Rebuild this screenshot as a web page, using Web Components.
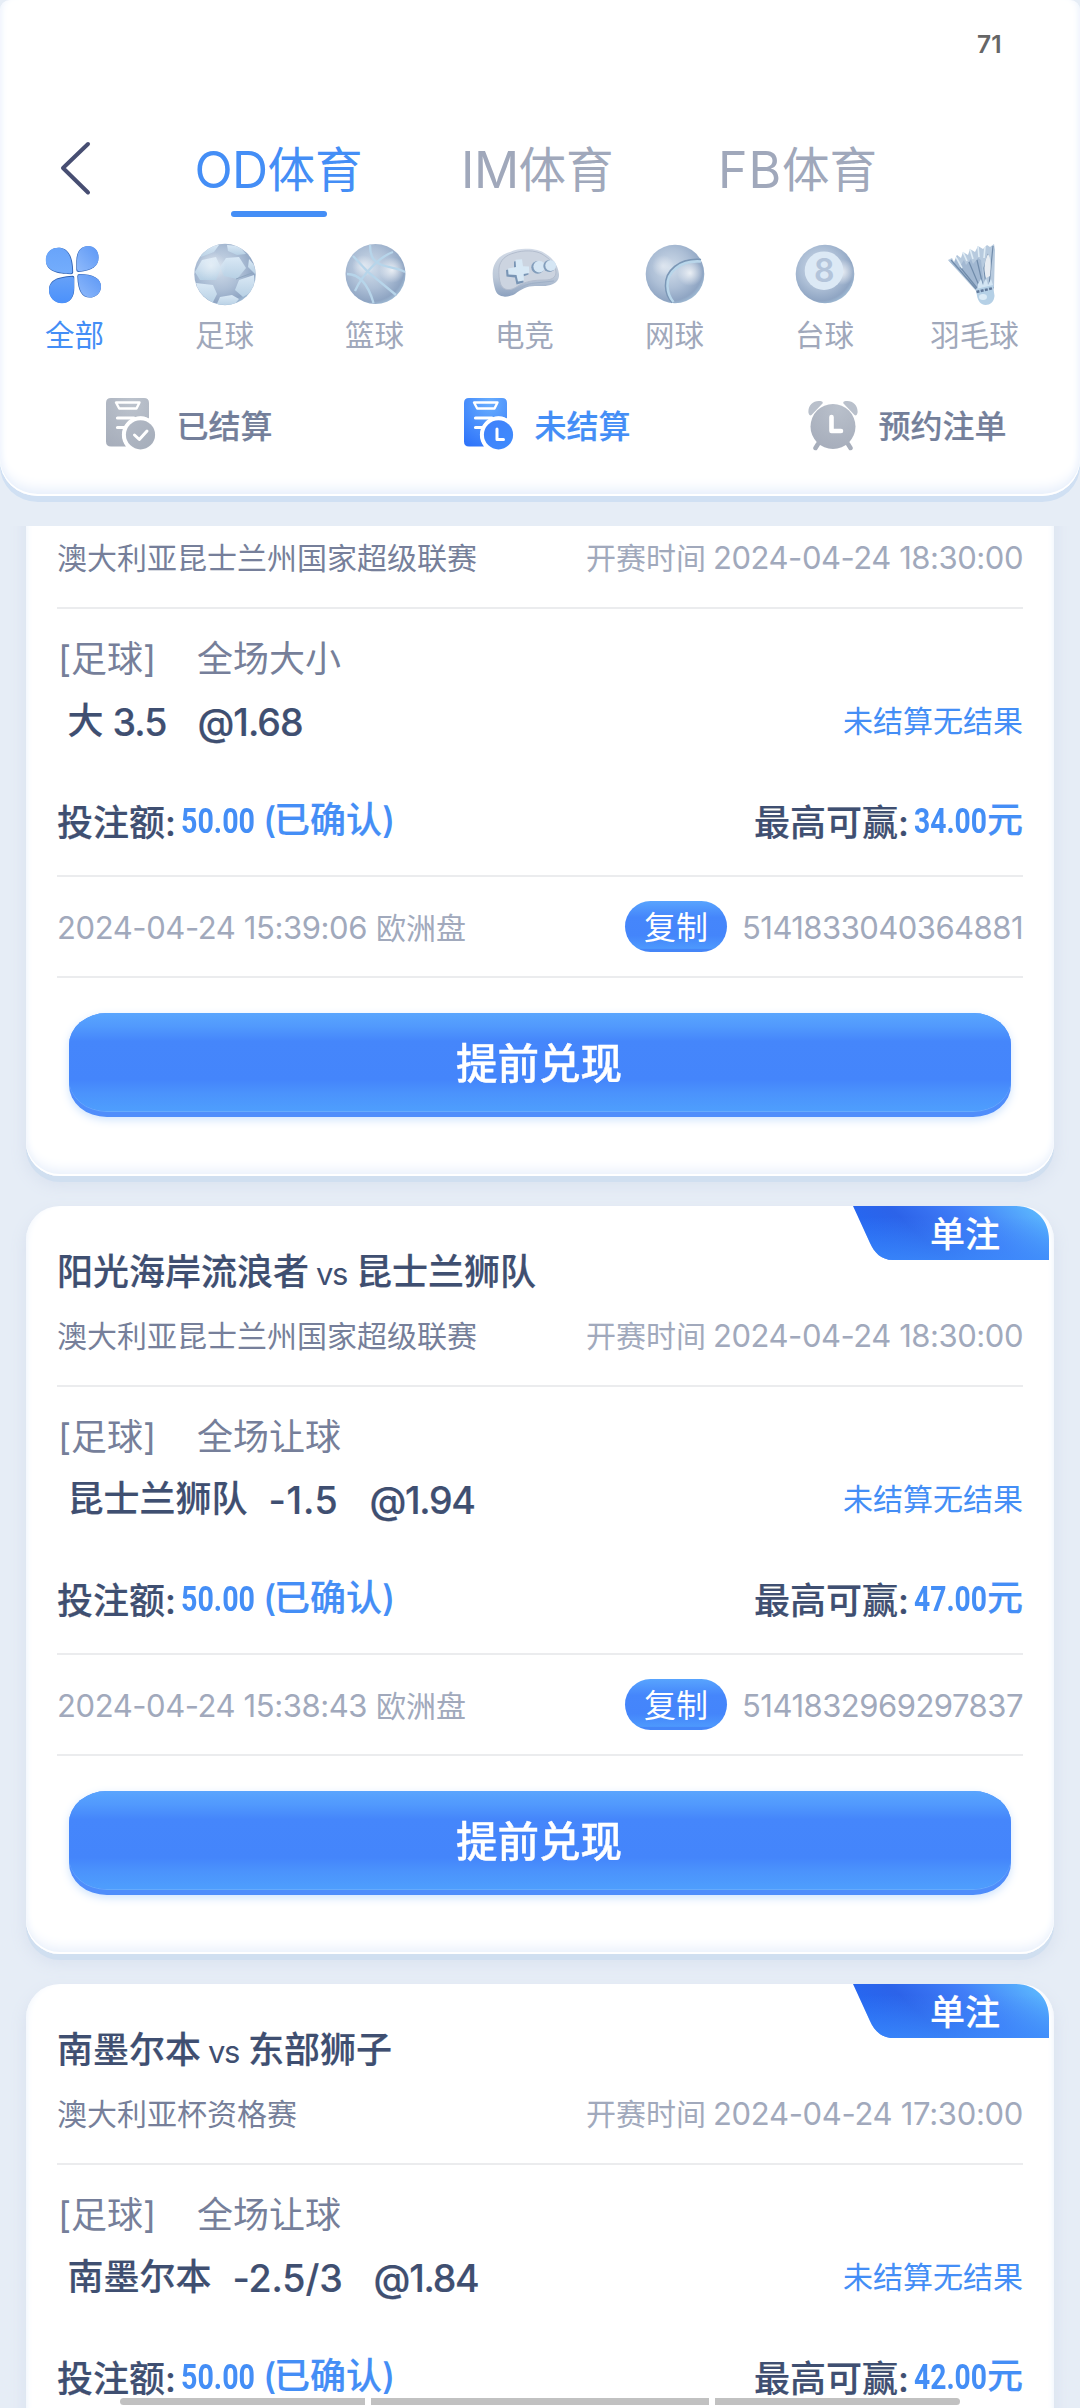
<!DOCTYPE html>
<html lang="zh-CN">
<head>
<meta charset="utf-8">
<title>注单</title>
<style>
html,body{margin:0;padding:0}
body{width:1080px;height:2408px;overflow:hidden;background:#e6edf6;
  font-family:Inter,"Noto Sans CJK SC",sans-serif;font-size:30px;color:#3f4f71}
</style>
</head>
<body>
<bet-page></bet-page>
<script>
const BLUE='#448ef6';

/* Text set to a fixed measure, by tracking or by horizontal scale */
class FitText extends HTMLElement{
  connectedCallback(){
    if(this.shadowRoot)return;
    const w=+this.getAttribute('w'),scale=this.hasAttribute('scale');
    this.attachShadow({mode:'open'}).innerHTML=`<style>
      :host{display:inline-block;width:${w}px;white-space:pre}
      span{display:inline-block;white-space:pre;transform-origin:0 50%}
      </style><span><slot></slot></span>`;
    const s=this.shadowRoot.querySelector('span');
    const n=this.textContent.length,nat=s.getBoundingClientRect().width;
    if(scale)s.style.transform=`scaleX(${w/nat})`;
    else s.style.letterSpacing=((w-nat)/n)+'px';
  }
}
customElements.define('fit-text',FitText);

const ballDefs=`<defs>
<radialGradient id="b" cx=".42" cy=".4" r=".62"><stop offset="0" stop-color="#d0dcea"/><stop offset=".55" stop-color="#adbfd6"/><stop offset=".9" stop-color="#8fa5c3"/><stop offset="1" stop-color="#9db8d2"/></radialGradient>
<radialGradient id="h"><stop offset="0" stop-color="#fff" stop-opacity=".75"/><stop offset="1" stop-color="#fff" stop-opacity="0"/></radialGradient>
<linearGradient id="l" x1="0" y1="0" x2="0" y2="1"><stop offset="0" stop-color="#d9e8f5"/><stop offset="1" stop-color="#b7d0e4"/></linearGradient>
<linearGradient id="p" x1="0" y1="0" x2="0" y2="1"><stop offset="0" stop-color="#d3dbe7"/><stop offset=".6" stop-color="#bcc8d8"/><stop offset="1" stop-color="#8ca1bf"/></linearGradient>
<linearGradient id="c1" x1="0" y1="0" x2="0" y2="1"><stop offset="0" stop-color="#68a4fa"/><stop offset="1" stop-color="#74adfc"/></linearGradient>
<linearGradient id="c2" x1="1" y1="0" x2="0" y2="1"><stop offset="0" stop-color="#5c97f5"/><stop offset="1" stop-color="#8fbafb"/></linearGradient>
<linearGradient id="c3" x1="0" y1="0" x2="0" y2="1"><stop offset="0" stop-color="#66a1f8"/><stop offset="1" stop-color="#4b91fb"/></linearGradient>
<clipPath id="k"><circle cx="36" cy="32.500" r="30.500"/></clipPath>
</defs>`;
const sportArt={
all:`<g fill="#2f62b4"><path d="M7 18.500C7 10.500 12.500 5.700 19.500 5.700C27.500 5.700 34 11.500 34.200 30.200Q34.200 32.300 32 32.200C14 32 7 27 7 18.500Z"/>
<path d="M37.300 28V19C37.300 10 41.500 4 49 4.200C55.500 4.500 59.500 9 59.500 15.500C59.500 24 54 28.200 40 30.100Q37.300 30.300 37.300 28Z"/>
<path d="M35.300 35.500V46C35.500 55 31 61 23 61C15.500 61 10 55 10 48C10 39 16.500 34.700 33.500 33.700Q35.500 33.600 35.300 35.500Z"/>
<path d="M38.300 34.300Q38.200 32.100 40.500 32C54 32 62 36.500 62 44.500C62 51 57 55.600 50.500 55.600C43.500 55.600 38.800 50 38.300 34.300Z"/></g>
<path fill="url(#c1)" d="M6.800 18C6.800 10.500 12 5.700 19 5.700C27 5.700 33 12 33.300 29.500Q33.300 31.500 31.300 31.400C14 31 6.800 26.500 6.800 18Z"/>
<path fill="url(#c2)" d="M38 27V18.500C38 9.500 42.500 3.900 49.500 4.100C55.700 4.300 59.600 9 59.600 15.200C59.600 23.500 54.500 27.500 41 29.200Q38 29.500 38 27Z"/>
<path fill="url(#c3)" d="M35 37V46.500C34.500 55.500 30.500 61.200 23 61.200C15.500 61.200 10 55.500 10 48.500C10 40 16.500 36 33 34.800Q35 34.800 35 37Z"/>
<path fill="url(#c2)" d="M39 34.300Q39 32.600 41 32.600C54.500 32.600 62 37 62 44.500C62 50.700 57 55.400 51 55.400C44 55.400 39.500 50 39 34.300Z"/>`,
soccer:`<circle cx="36" cy="32.500" r="30.700" fill="url(#b)"/>
<g clip-path="url(#k)" fill="url(#l)"><path d="M13 18L27 15L32 26L27 38L11 38L6 30Z"/><path d="M37 16L50 15L57 26L48 37L35 34L31 25Z"/><path d="M7 41L24 43L28 52L23 62L10 56Z"/><path d="M50 38L65 33L66 48L54 55L46 48Z"/><path d="M31 55L43 53L50 57L44 64L27 64Z"/><path d="M20 3L30 3L25 10L12 15L11 9Z"/><path d="M38 3L50 4L57 12L48 13L39 9Z"/><path d="M60 17L67 25L66 32L59 25Z"/></g><path d="M47 37L63 31" stroke="#8ea6bf" stroke-width="1"/>
<circle cx="22" cy="24" r="15" fill="url(#h)" opacity=".6"/>`,
basket:`<circle cx="36.500" cy="32" r="30" fill="url(#b)"/><circle cx="53" cy="28" r="13" fill="url(#h)"/><circle cx="24" cy="24" r="11" fill="url(#h)" opacity=".7"/>
<g fill="none" stroke="#b7d5ea" stroke-width="2.300"><path d="M14 14L29 30L57 53"/><path d="M54 10C42 14 24 31 16 49"/><path d="M31 3C31 15 35 20 43 23C51 26 58 26 66 30"/><path d="M8 32C21 32 29 42 34.500 61"/></g>`,
pad:`<path d="M3.700 30.700C4 22 9 13 21 10C26 7.500 32 6.500 37.700 6.700C45 6.800 52 8 57 12C64 16.500 69 23 70 32C70.300 37 68 40.500 64 42C58 45 52 43.500 46 44C38 44 32 47.500 26 52C22 54 19 54.700 16 54.700C10 54 7.500 52 6 47C4.500 42 3.500 36 3.700 30.700Z" fill="url(#p)"/>
<path d="M10 26C11 18 17 13 25 11C34 8 46 8 53 12C61 17 66 22 67 30C67 36 62 38 56 38C46 38 37 39 29 44C22 49 15 49 12 43C10 38 9.500 32 10 26Z" fill="#ccd4e0" stroke="#b3bdce" stroke-width="1"/>
<path d="M65 39L46 41C36 42 31 46 24 50" fill="none" stroke="#9fb0c7" stroke-width="1"/>
<path d="M25 19.500L31.500 18.500L33 25.500L39 26.500L39.500 32.500L34 34.500L34.500 40.500L27.500 42.500L26 35.500L17.500 34.500L17 28L25 26.500Z" fill="#7995b5"/>
<path d="M26.500 17.800L33 17.300L34 24.300L40 24.600L40.300 31L34.700 32L35 38.600L29 39.600L27.500 33L19.500 32.500L19 26.500L27 25Z" fill="#d7e8f5"/>
<circle cx="48.700" cy="25.300" r="6.400" fill="#829dbb"/><circle cx="50.200" cy="24.600" r="5.800" fill="#d5e6f4"/><circle cx="60.300" cy="24" r="6" fill="#829dbb"/><circle cx="61.700" cy="23.500" r="5.400" fill="#d5e6f4"/>`,
tennis:`<circle cx="36" cy="32" r="29.300" fill="url(#b)"/><circle cx="51" cy="31" r="13" fill="url(#h)"/><circle cx="24" cy="24" r="11" fill="url(#h)" opacity=".6"/>
<path d="M62 18.500C40 17 27 29 27.500 44C27.700 51 30 56 34 60" fill="none" stroke="#7b97b6" stroke-width="3.600"/><path d="M62 19.500C41 18 28 30 28.500 44C28.700 51 31 56 34.500 60" fill="none" stroke="#b9d6ea" stroke-width="2.600"/>`,
pool:`<circle cx="36" cy="32" r="29.300" fill="url(#b)"/><circle cx="53" cy="30" r="13" fill="url(#h)"/><circle cx="35" cy="28.700" r="19.300" fill="#dce9f5"/>
<text x="35.200" y="40" text-anchor="middle" font-family="Inter" font-weight="600" font-size="32" fill="#b3c4da">8</text>`,
shuttle:`<path d="M9 18L13 16L15 20L18 13L22 16L24 10L29 13L31 7L36 10L39 4L44 7L48 3L51 5L55 2L56 8L55 46L38 50Z" fill="#b7cade"/>
<path d="M9 18L15 22L18 13L21 24L25 18L27 23L32 17L34 22L39 16L42 18L45 44L38 47Z" fill="#a2b8d2"/>
<path d="M54 4L52 24L50 44M49 12L45 26L47 44M38 18L44 44M30 20L41 46M21 25L38 46M12 18L37 47" fill="none" stroke="#718cab" stroke-width="1.200"/>
<path d="M49 12C46 18 44 26 47 36L51 34C52 24 52 16 49 12Z" fill="#e9edf2"/><path d="M24 10L28 19M31 7L34 17M39 4L40 15M46 5L45 16M17 15L23 26" stroke="#e0ecf5" stroke-width="1.600"/>
<path d="M39 42L42 37L44 43L47 36L49 43L52 37L54 43L54 47L38 50Z" fill="#d3e5f3"/><path d="M37 47L54 43L55.500 54C55 60 51 63 46.500 63C42 63 39 59 38 54Z" fill="#b5d0e6"/><path d="M37.500 50L54.500 46" stroke="#61799a" stroke-width="2.500" stroke-dasharray="3 1.300"/><ellipse cx="44" cy="55" rx="4" ry="3" fill="#dcebf6"/>`
};
class SportTab extends HTMLElement{
  connectedCallback(){
    this.attachShadow({mode:'open'}).innerHTML=`<style>
    :host{display:flex;flex-direction:column;align-items:center;width:150px;color:#a0a8bb;font-size:29.500px}
    :host([active]){color:${BLUE}} svg{display:block} span{height:36px;line-height:36px;margin-top:8.500px;margin-left:-1px}
    </style><svg width="72" height="66" viewBox="0 0 72 66">${ballDefs}${sportArt[this.getAttribute('icon')]}</svg><span><slot></slot></span>`;
  }
}
customElements.define('sport-tab',SportTab);

const sheet=(badge)=>`<path fill="url(#g)" d="M5 0H38Q43 0 43 5V20.500A18.500 18.500 0 0 0 20 48.500H5Q0 48.500 0 43.500V5Q0 0 5 0Z"/>
<path d="M10 4.500H33.500L30.500 10.500H13.200Z" fill="none" stroke="#fff" stroke-width="2.400" stroke-linejoin="round"/>
<path d="M11.500 20H28M11.500 29.500H18" stroke="#fff" stroke-width="3.200" stroke-linecap="round"/>
<circle cx="34.500" cy="36.800" r="18.200" fill="#fff"/><circle cx="34.500" cy="36.800" r="14.600" fill="url(#g2)"/>${badge}`;
const stateArt={
done:['#bcc3cd','#a7aebb','#b2b9c5','#a5adba',sheet('<path d="M28.500 37L33.300 41.500L41 33" fill="none" stroke="#fff" stroke-width="3" stroke-linecap="round" stroke-linejoin="round"/>')],
open:['#68aefe','#2f74fa','#3f80fb','#3f8cfd',sheet('<path d="M33 31V41.500H39.500" fill="none" stroke="#fff" stroke-width="3" stroke-linecap="round" stroke-linejoin="round"/>')],
clock:['#b9c0cb','#a5acba','#b9c0cb','#a5acba',`<g transform="translate(0 1)"><g fill="#b9c0cb"><path d="M.5 14C-.5 6 6 .5 14 2.500Q15.500 3.500 14 5L3.500 16Q1.300 17.500 .5 14Z"/><path d="M49.500 14C50.500 6 44 .5 36 2.500Q34.500 3.500 36 5L46.500 16Q48.700 17.500 49.500 14Z"/></g><path d="M10 45L7.500 49M40 45L42.500 49" stroke="#a7aebb" stroke-width="4.500" stroke-linecap="round"/><circle cx="25" cy="27.500" r="22.500" fill="url(#g)"/><path d="M23.500 18V32H33" fill="none" stroke="#fff" stroke-width="4.600" stroke-linecap="round" stroke-linejoin="round"/></g>`]
};
class StateTab extends HTMLElement{
  connectedCallback(){
    const a=stateArt[this.getAttribute('icon')];
    this.attachShadow({mode:'open'}).innerHTML=`<style>
    :host{display:flex;align-items:flex-start;gap:20.500px;color:#747f9a;font-size:32px;font-weight:500;line-height:57px}
    :host([active]){color:${BLUE}} svg{display:block} span{white-space:nowrap;-webkit-text-stroke:.2px}
    </style><svg width="50" height="53" viewBox="0 0 50 53"><defs>
    <radialGradient id="g" cx=".6" cy=".1" r="1"><stop offset="0" stop-color="${a[0]}"/><stop offset="1" stop-color="${a[1]}"/></radialGradient>
    <linearGradient id="g2" x1="0" y1="0" x2="1" y2="1"><stop offset="0" stop-color="${a[2]}"/><stop offset="1" stop-color="${a[3]}"/></linearGradient></defs>${a[4]}</svg><span><slot></slot></span>`;
  }
}
customElements.define('state-tab',StateTab);

class AppHeader extends HTMLElement{
  connectedCallback(){
    this.attachShadow({mode:'open'}).innerHTML=`<style>
    :host{display:flex;flex-direction:column;position:relative;z-index:2;box-sizing:border-box;height:496px;background:#fff;
      border-radius:10px 10px 38px 38px/10px 10px 36px 36px;
      box-shadow:0 6px 0 #d0e0f3,inset 0 -2px 0 #fff,inset 0 -14px 14px -8px #e4edfb,inset 7px 0 7px -5px #f0f5fd,inset -7px 0 7px -5px #f0f5fd}
    .status{height:88px;display:flex;justify-content:flex-end;box-sizing:border-box;padding-right:78px;
      font:600 24.500px/88px Inter;color:#666}
    .nav{height:130px;display:flex}
    .back{padding:51px 0 0 58px;width:194.500px;box-sizing:border-box}
    .p{display:flex;flex-direction:column;align-items:flex-start;color:#a0a8bb;font-size:47.500px;line-height:60px;padding-top:52px}
    .p div{display:flex}
    .p.on{color:${BLUE}} .p i{width:96px;height:6px;border-radius:3px;background:${BLUE};margin:10.500px 0 0 36.500px}
    .sports{display:flex;margin-top:24px;height:112px}
    .states{display:flex;margin-top:44px}
    fit-text{font-size:50px;font-weight:400}
    </style>
    <div class="status"><fit-text w="25" style="font:inherit">71</fit-text></div>
    <div class="nav"><div class="back"><svg width="34" height="58" viewBox="0 0 34 58" style="display:block"><path d="M30 5L5 29L30 53.500" fill="none" stroke="#474e72" stroke-width="4" stroke-linecap="round" stroke-linejoin="round"/></svg></div>
      <div class="p on" style="width:266.500px"><div><fit-text w="73">OD</fit-text>体育</div><i></i></div>
      <div class="p" style="width:257px"><div><fit-text w="57.500">IM</fit-text>体育</div></div>
      <div class="p"><div><fit-text w="64">FB</fit-text>体育</div></div>
    </div>
    <div class="sports"><slot name="sport"></slot></div>
    <div class="states"><slot name="state"></slot></div>`;
  }
}
customElements.define('app-header',AppHeader);

class GlossButton extends HTMLElement{
  connectedCallback(){
    this.attachShadow({mode:'open'}).innerHTML=`<style>
    :host{display:block;height:104px;box-sizing:border-box;border-radius:38px/32px;text-align:center;color:#fff;
      font-size:41.500px;font-weight:500;line-height:103px;
      background:#4f8dfb;filter:drop-shadow(0 3px 4px #cfe4fd)}
    div{height:98px;border-radius:38px/32px;background:linear-gradient(#59a5fe 0,#5199fd 14%,#4586fb 29%,#4485fb 68%,#4b93fc 82%,#4e9efd 100%);box-shadow:0 1px 0 #65aafc}
    span{-webkit-text-stroke:.4px;margin-left:-2px}
    </style><div><span><slot></slot></span></div>`;
  }
}
customElements.define('gloss-button',GlossButton);

class CopyPill extends HTMLElement{
  connectedCallback(){
    this.attachShadow({mode:'open'}).innerHTML=`<style>
    :host{display:block;width:102px;height:51px;border-radius:26px;text-align:center;color:#fff;font-size:32px;line-height:54px;
      background:linear-gradient(#58a4fe 0,#4586fb 32%,#4485fb 68%,#4d99fd 93%,#4586f8 94%)}
    </style><slot></slot>`;
  }
}
customElements.define('copy-pill',CopyPill);

class BetCard extends HTMLElement{
  connectedCallback(){
    const d=n=>this.getAttribute(n);
    const badge=`<div class="badge"><svg width="196" height="54" viewBox="0 0 196 54"><defs>
      <linearGradient id="a" x1="0" y1=".5" x2="1" y2=".2"><stop offset="0" stop-color="#2468f3"/><stop offset=".3" stop-color="#2c63e9"/><stop offset=".62" stop-color="#417ef8"/><stop offset="1" stop-color="#5dbafe"/></linearGradient>
      <linearGradient id="f" x1="0" y1="0" x2="0" y2="1"><stop offset=".2" stop-color="#3d8cfb" stop-opacity="0"/><stop offset="1" stop-color="#3d8cfb" stop-opacity=".75"/></linearGradient></defs>
      <path fill="url(#a)" d="M0 0H162C183 0 196 14 196 34V54H40C28 54 21 46 17 37Z"/><path fill="url(#f)" d="M0 0H162C183 0 196 14 196 34V54H40C28 54 21 46 17 37Z"/></svg><span>单注</span></div>`;
    const title=`<span class="m">${d('home')}</span><small><fit-text w="31">vs</fit-text></small><span class="m">${d('away')}</span>`;
    const foot=`<hr style="margin-top:27px">
    <div class="r ft"><span class="lt"><fit-text class="n" w="310">${d('placed')}</fit-text><span style="margin-left:9px">欧洲盘</span></span>
      <span><copy-pill>复制</copy-pill><span class="lt" style="margin-left:15px"><fit-text class="n" w="281">${d('no')}</fit-text></span></span></div>
    <hr>
    <gloss-button style="margin:35px 12px 0"><slot></slot></gloss-button>`;
    this.attachShadow({mode:'open'}).innerHTML=`<style>
    :host{display:flex;flex-direction:column;position:relative;box-sizing:border-box;height:748px;flex:none;margin:0 26px 30px;
      padding:35px 31px 0;background:#fff;border-radius:34px;line-height:1.2;
      box-shadow:0 6px 0 #d0dff0,0 8px 14px 3px #dbe3f0,inset 0 -2px 0 #fff,inset 0 -13px 13px -8px #e6eefb,inset 6px 0 7px -5px #f0f5fc,inset -6px 0 7px -5px #f0f5fc}
    .r{display:flex;align-items:center;justify-content:space-between;white-space:nowrap;box-sizing:border-box}
    .r>*{display:flex;align-items:center}
    .t{height:60px;padding-top:3px;font-size:36px;justify-content:flex-start}
    .m{font-weight:500;-webkit-text-stroke:.2px}
    .t small{font-size:31px;display:block;padding:2px 0 0;margin:0 9px 0 7px}
    .lg{height:69px;font-size:30px;color:#767f9a}
    .lt{color:#a1a9bc;font-size:30px}
    .n{font-size:31px}
    hr{border:0;height:2px;background:#ebecee;margin:0;flex:none;width:100%}
    .mk{height:51px;padding-top:2px;margin-top:24px;font-size:36px;color:#767f9a;justify-content:flex-start}
    .pk{height:60px;margin-top:7px;font-size:36px}
    .pk .m{padding:2px 0 0 10.500px}
    .pk fit-text{font-size:37.500px}
    .rs{color:${BLUE};font-size:30px}
    .am{height:52px;padding-top:3px;margin-top:45px;font-size:36px}
    .am b{display:flex;align-items:center;color:${BLUE};font-weight:500;position:relative;top:-3px}
    .cond{font:700 35px/50px Roboto,sans-serif;padding-top:2px}
    .ft{height:99px}
    .ft .lt{padding-top:2px}
    .badge{position:absolute;top:0;right:5px;width:196px;height:54px}
    .badge svg{position:absolute;inset:0}
    .badge span{position:absolute;left:77px;top:0;font-size:35px;line-height:57px;color:#fff;font-weight:500;white-space:nowrap;-webkit-text-stroke:.2px}
    </style>
    ${d('home')?badge:''}
    <div class="r t">${d('home')?title:''}</div>
    <div class="r lg"><span>${d('league')}</span><span class="lt">开赛时间<fit-text class="n" w="310" style="margin-left:7px">${d('time')}</fit-text></span></div>
    <hr style="margin-top:15px">
    <div class="r mk"><fit-text w="13" style="margin-left:1px">[</fit-text>足球<fit-text w="13">]</fit-text><span style="margin-left:41px">${d('market')}</span></div>
    <div class="r pk"><span class="m">${d('pick')}<fit-text w="${d('lw')}" style="margin-left:${d('lg')}px">${d('line')}</fit-text><fit-text w="105" style="margin-left:31px">@${d('odds')}</fit-text></span><span class="rs">未结算无结果</span></div>
    <div class="r am"><span><span class="m">投注额</span><fit-text w="16" class="m">:</fit-text><b><fit-text scale w="74" class="cond">50.00</fit-text><fit-text w="11" style="margin-left:8px">(</fit-text><span class="m">已确认</span><fit-text w="11">)</fit-text></b></span>
      <span><span class="m">最高可赢</span><fit-text w="16" class="m">:</fit-text><b><fit-text scale w="73" class="cond">${d('win')}</fit-text><span class="m">元</span></b></span></div>
    ${d('placed')?foot:''}`;
  }
}
customElements.define('bet-card',BetCard);

class BetPage extends HTMLElement{
  connectedCallback(){
    this.attachShadow({mode:'open'}).innerHTML=`<style>
    :host{display:flex;flex-direction:column;width:1080px;height:2408px;overflow:hidden;position:relative}
    .list{flex:1;min-height:0;margin-top:30px;overflow:hidden;display:flex;flex-direction:column}
    .list bet-card:first-child{margin-top:-98px}
    .bar{position:absolute;left:120px;bottom:3px;width:840px;height:7px;display:flex;gap:6px;border-radius:4px;overflow:hidden;background:#fff}
    .bar i{background:#c1c1c1;flex:245} .bar i:nth-child(2){flex:338}
    </style>
    <app-header>
      <sport-tab slot="sport" icon="all" active>全部</sport-tab><sport-tab slot="sport" icon="soccer">足球</sport-tab><sport-tab slot="sport" icon="basket">篮球</sport-tab><sport-tab slot="sport" icon="pad">电竞</sport-tab><sport-tab slot="sport" icon="tennis">网球</sport-tab><sport-tab slot="sport" icon="pool">台球</sport-tab><sport-tab slot="sport" icon="shuttle">羽毛球</sport-tab>
      <state-tab slot="state" icon="done" style="margin-left:106px">已结算</state-tab><state-tab slot="state" icon="open" active style="margin-left:191.500px">未结算</state-tab><state-tab slot="state" icon="clock" style="margin-left:177.500px">预约注单</state-tab>
    </app-header>
    <div class="list">
      <bet-card league="澳大利亚昆士兰州国家超级联赛" time="2024-04-24 18:30:00" market="全场大小" pick="大" line="3.5" lw="54" lg="9" odds="1.68" win="34.00" placed="2024-04-24 15:39:06" no="5141833040364881">提前兑现</bet-card>
      <bet-card home="阳光海岸流浪者" away="昆士兰狮队" league="澳大利亚昆士兰州国家超级联赛" time="2024-04-24 18:30:00" market="全场让球" pick="昆士兰狮队" line="-1.5" lw="70" lg="21" odds="1.94" win="47.00" placed="2024-04-24 15:38:43" no="5141832969297837">提前兑现</bet-card>
      <bet-card home="南墨尔本" away="东部狮子" league="澳大利亚杯资格赛" time="2024-04-24 17:30:00" market="全场让球" pick="南墨尔本" line="-2.5/3" lw="110" lg="21" odds="1.84" win="42.00"></bet-card>
    </div>
    <div class="bar"><i></i><i></i><i></i></div>`;
  }
}
customElements.define('bet-page',BetPage);
</script>
</body>
</html>
